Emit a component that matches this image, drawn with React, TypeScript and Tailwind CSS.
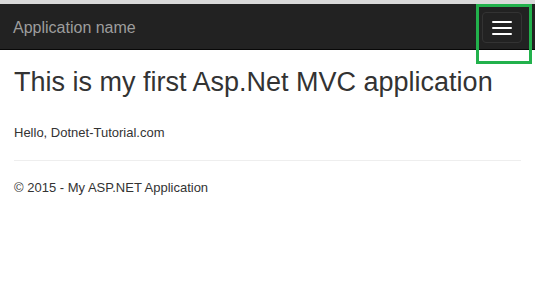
import React, { FC } from 'react';

const NavToggle: FC = () => {
    return (
        <button className="mt-[8px] mr-[13px] w-[40px] h-[31px] border border-[#333] rounded-[4px] flex flex-col items-center justify-center gap-[4px]">
            <span className="block w-[20px] h-[2px] bg-white rounded-[1px]" />
            <span className="block w-[20px] h-[2px] bg-white rounded-[1px]" />
            <span className="block w-[20px] h-[2px] bg-white rounded-[1px]" />
        </button>
    )
}

const App: FC = () => {
    return (
        <div className="relative w-[535px] h-[296px] bg-white text-[#333] overflow-hidden" style={{ fontFamily: '"Liberation Sans", Arial, sans-serif' }}>

            <div className="h-[4px] bg-[#d9d9d9]" />

            <nav className="h-[46px] bg-[#222] border-b border-[#080808] flex justify-between items-start">
                <span className="pt-[14px] pl-[13px] text-[16px] leading-[20px] text-[#9d9d9d]">
                    Application name
                </span>
                <NavToggle />
            </nav>

            <div className="px-[14px]">
                <h1 className="mt-[17px] text-[27px] leading-[30px] font-normal">
                    This is my first Asp.Net MVC application
                </h1>

                <p className="mt-[27px] text-[13px] leading-[18px]">Hello, Dotnet-Tutorial.com</p>

                <hr className="mt-[18px] border-t border-[#eee]" />

                <footer className="mt-[18px] text-[13px] leading-[18px]">
                    <p>© 2015 - My ASP.NET Application</p>
                </footer>
            </div>

            {/* highlight around the menu toggle */}
            <div className="absolute left-[476px] top-[4px] w-[56px] h-[60px] border-[3px] border-[#22b14c]" />
        </div>
    )
}

export default App
